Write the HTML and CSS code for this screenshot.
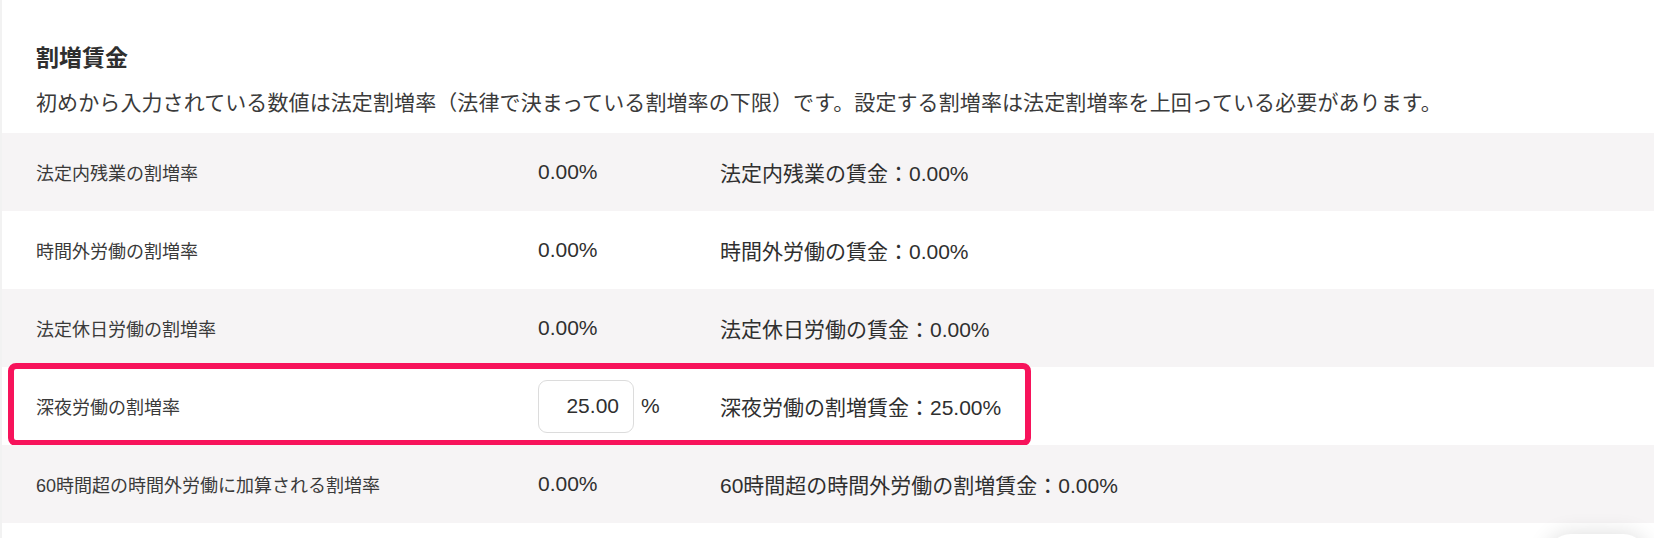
FILE: index.html
```html
<!DOCTYPE html>
<html lang="ja">
<head>
<meta charset="utf-8">
<title>割増賃金</title>
<link rel="stylesheet" href="styles.css">
</head>
<body>
<main class="page">
  <section class="surcharge">
    <header class="surcharge__head">
      <h2 class="surcharge__title">割増賃金</h2>
      <p class="surcharge__note">初めから入力されている数値は法定割増率（法律で決まっている割増率の下限）です。設定する割増率は法定割増率を上回っている必要があります。</p>
    </header>

    <div class="rate-list">
      <div class="rate-row">
        <div class="rate-row__label">法定内残業の割増率</div>
        <div class="rate-row__value">0.00%</div>
        <div class="rate-row__result">法定内残業の賃金：0.00%</div>
      </div>
      <div class="rate-row">
        <div class="rate-row__label">時間外労働の割増率</div>
        <div class="rate-row__value">0.00%</div>
        <div class="rate-row__result">時間外労働の賃金：0.00%</div>
      </div>
      <div class="rate-row">
        <div class="rate-row__label">法定休日労働の割増率</div>
        <div class="rate-row__value">0.00%</div>
        <div class="rate-row__result">法定休日労働の賃金：0.00%</div>
      </div>
      <div class="rate-row rate-row--edit">
        <div class="rate-row__label">深夜労働の割増率</div>
        <div class="rate-row__value">
          <input class="rate-input" type="text" value="25.00">
          <span class="rate-unit">%</span>
        </div>
        <div class="rate-row__result">深夜労働の割増賃金：25.00%</div>
        <span class="focus-ring"></span>
      </div>
      <div class="rate-row">
        <div class="rate-row__label">60時間超の時間外労働に加算される割増率</div>
        <div class="rate-row__value">0.00%</div>
        <div class="rate-row__result">60時間超の時間外労働の割増賃金：0.00%</div>
      </div>
    </div>
  </section>

  <div class="float-pill"></div>
</main>
</body>
</html>
```

FILE: styles.css
```css
* {
  box-sizing: border-box;
}

html,
body {
  margin: 0;
  padding: 0;
  height: 100%;
  overflow: hidden;
}

body {
  background: #f2f2f2;
  font-family: "Liberation Sans", "Noto Sans CJK JP", sans-serif;
  color: #333333;
}

.page {
  margin-left: 2px;
  min-height: 100%;
  background: #ffffff;
}

/* heading block */
.surcharge__head {
  padding: 42px 0 15px 34px;
}

.surcharge__title {
  margin: 0;
  font-size: 23px;
  line-height: 32px;
  font-weight: 700;
  color: #2f2f2f;
}

.surcharge__note {
  margin: 14px 0 0;
  font-size: 21px;
  line-height: 30px;
  letter-spacing: 0.1px;
  color: #3a3a3a;
}

/* rate table */
.rate-row {
  position: relative;
  display: flex;
  align-items: center;
  height: 78px;
  background: #ffffff;
}

.rate-row:nth-child(odd) {
  background: #f6f4f5;
}

.rate-row__label {
  flex: 0 0 536px;
  padding-left: 34px;
  font-size: 18px;
  color: #3a3a3a;
}

.rate-row__value {
  flex: 0 0 182px;
  display: flex;
  align-items: center;
  font-size: 21px;
  color: #2f2f2f;
}

.rate-row__result {
  font-size: 21px;
  color: #2f2f2f;
}

.rate-input {
  width: 96px;
  height: 53px;
  padding: 0 14px 0 8px;
  border: 1px solid #dcdcdc;
  border-radius: 9px;
  background: #ffffff;
  font-family: inherit;
  font-size: 21px;
  color: #2f2f2f;
  text-align: right;
  outline: none;
}

.rate-unit {
  margin-left: 7px;
  font-size: 21px;
}

/* highlight around the editable row */
.focus-ring {
  position: absolute;
  left: 6px;
  width: 1023px;
  top: -4px;
  bottom: -1px;
  border: 6px solid #f7135b;
  border-radius: 8px;
  pointer-events: none;
}

/* floating action pill, mostly below the fold */
.float-pill {
  position: fixed;
  right: 7px;
  bottom: -44px;
  width: 100px;
  height: 48px;
  border-radius: 24px;
  background: #ffffff;
  box-shadow: 0 0 22px rgba(0, 0, 0, 0.14);
}
```
